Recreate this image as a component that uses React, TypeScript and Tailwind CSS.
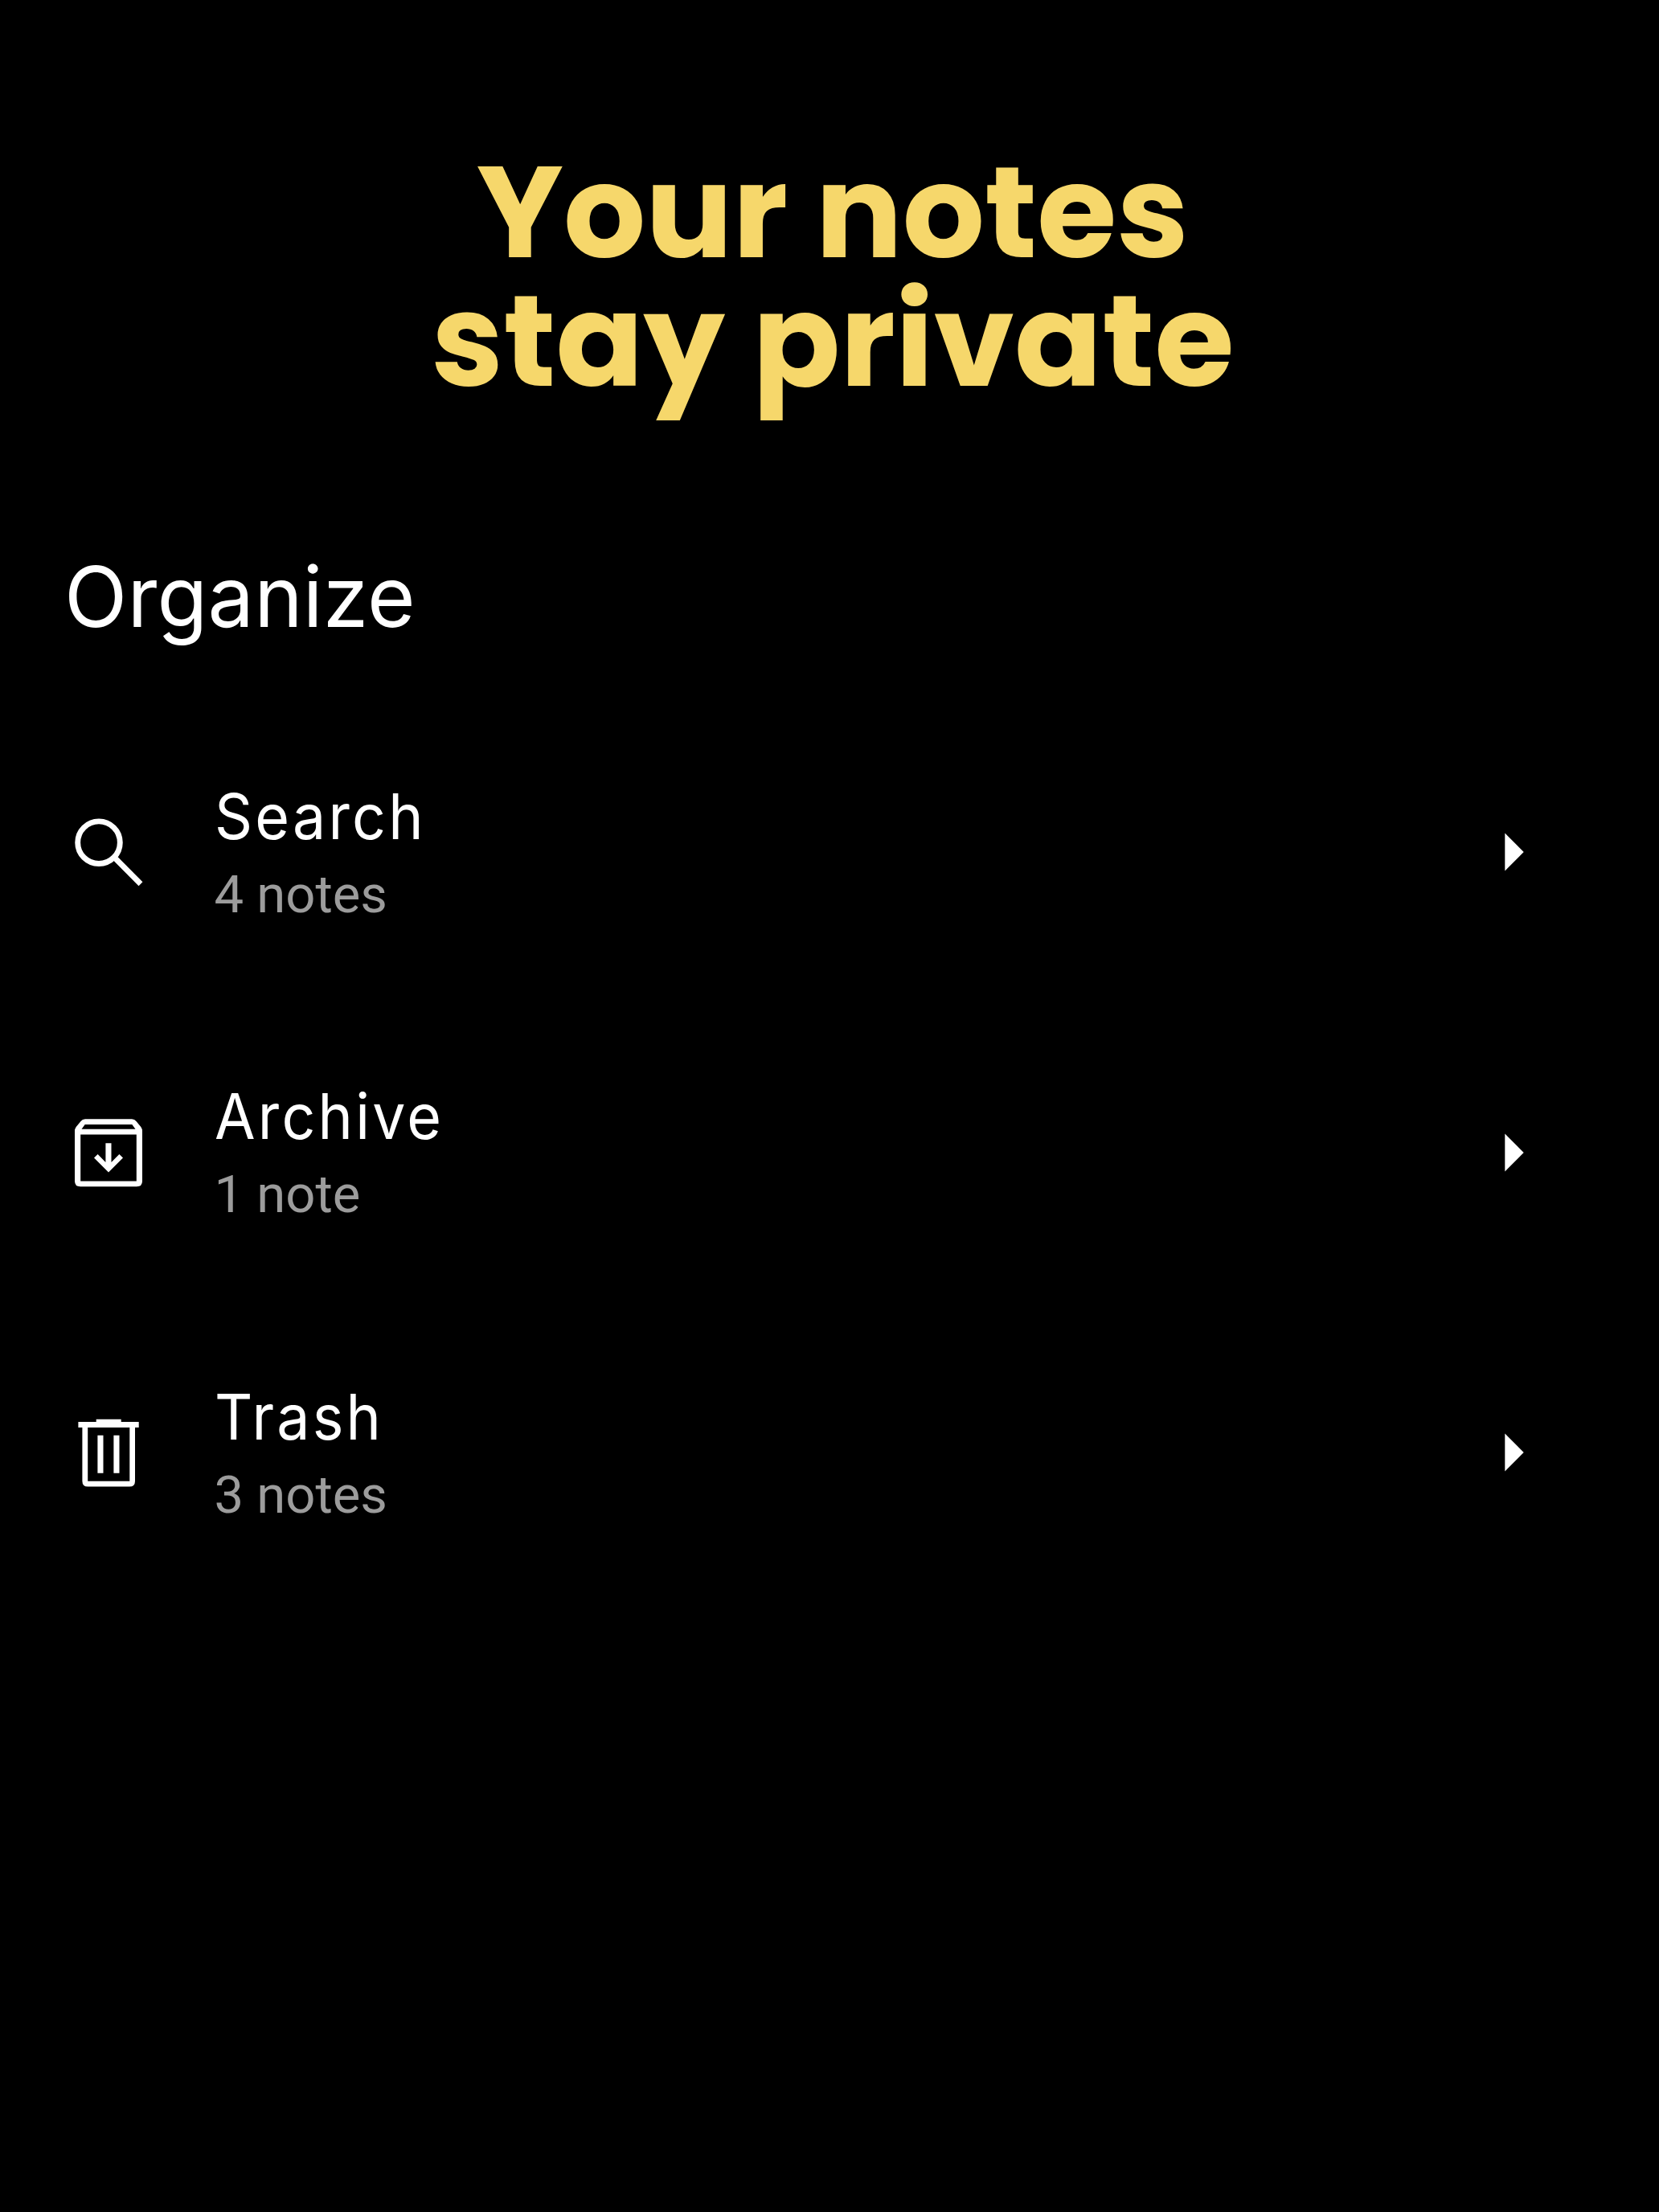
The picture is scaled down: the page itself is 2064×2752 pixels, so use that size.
import type { ReactNode } from "react";

type Item = { title: string; count: string; icon: ReactNode };

const SearchIcon = (
  <svg viewBox="0 0 112 112" className="size-[112px]" fill="none" stroke="#fff" strokeWidth="6.9">
    <circle cx="44" cy="44.2" r="26.3" />
    <path d="M63.5 63 96 95.7" />
  </svg>
);

const ArchiveIcon = (
  <svg viewBox="0 0 112 112" className="size-[112px]" fill="#fff">
    <path
      fillRule="evenodd"
      d="M27 14.2H85Q88.5 14.2 90.5 17L96.3 24Q98 26.5 98 29V91.5Q98 98.3 91 98.3H21Q14 98.3 14 91.5V29Q14 26.5 15.7 24L21.5 17Q23.5 14.2 27 14.2ZM26.7 21 22.5 26.7H89.5L85.3 21ZM21.2 33.6V91.5H90.8V33.6Z"
    />
    <path d="M52.4 44.3H59.5V68L69.4 58 74 62.6 56 80.5 38 62.6 42.6 58 52.4 68Z" />
  </svg>
);

const TrashIcon = (
  <svg viewBox="0 0 112 112" className="size-[112px]" fill="#fff">
    <path
      fillRule="evenodd"
      d="M40.7 14.7H71.7V18H93.7V25H89V91.7Q89 98.6 82 98.6H30.4Q23.4 98.6 23.4 91.7V25H18.4V18H40.7ZM30.2 25V91.7H82.3V25Z"
    />
    <path d="M42.4 34.7H49.5V81.7H42.4ZM62.4 34.7H69.5V81.7H62.4Z" />
  </svg>
);

const items: Item[] = [
  { title: "Search", count: "4 notes", icon: SearchIcon },
  { title: "Archive", count: "1 note", icon: ArchiveIcon },
  { title: "Trash", count: "3 notes", icon: TrashIcon },
];

function Row({ title, count, icon }: Item) {
  return (
    <li className="flex h-[373.6px] items-center pr-[168px] pl-[79.3px]">
      {icon}
      <div className="ml-[75.2px] flex flex-1 flex-col items-start gap-[3px] pt-[8px]">
        <span className="ml-[0.9px] origin-left scale-x-[0.94] font-['Inter',sans-serif] text-[78px] leading-[94px] tracking-[3.45px] text-white">
          {title}
        </span>
        <span className="font-['Roboto',sans-serif] text-[65.2px] leading-[94px] text-[#9c9c9c]">{count}</span>
      </div>
      <svg viewBox="0 0 24 48" className="h-12 w-6" fill="#fff">
        <path d="M.3 .5V47.5L23.7 24Z" />
      </svg>
    </li>
  );
}

export default function App() {
  return (
    <main className="min-h-[2752px] w-full bg-black pt-[184px]">
      <h1 className="pl-2 text-center font-['Poppins','Inter',sans-serif] text-[160.7px] leading-[160px] font-bold text-[#f6d76b]">
        Your notes
        <br />
        stay private
      </h1>
      <h2 className="mt-[175px] ml-[79.5px] w-fit origin-left scale-x-[0.975] font-['Inter',sans-serif] text-[105px] leading-[126px] font-normal tracking-[0.2px] text-white">
        Organize
      </h2>
      <ul className="mt-[68.4px]">
        {items.map((item) => (
          <Row key={item.title} {...item} />
        ))}
      </ul>
    </main>
  );
}
